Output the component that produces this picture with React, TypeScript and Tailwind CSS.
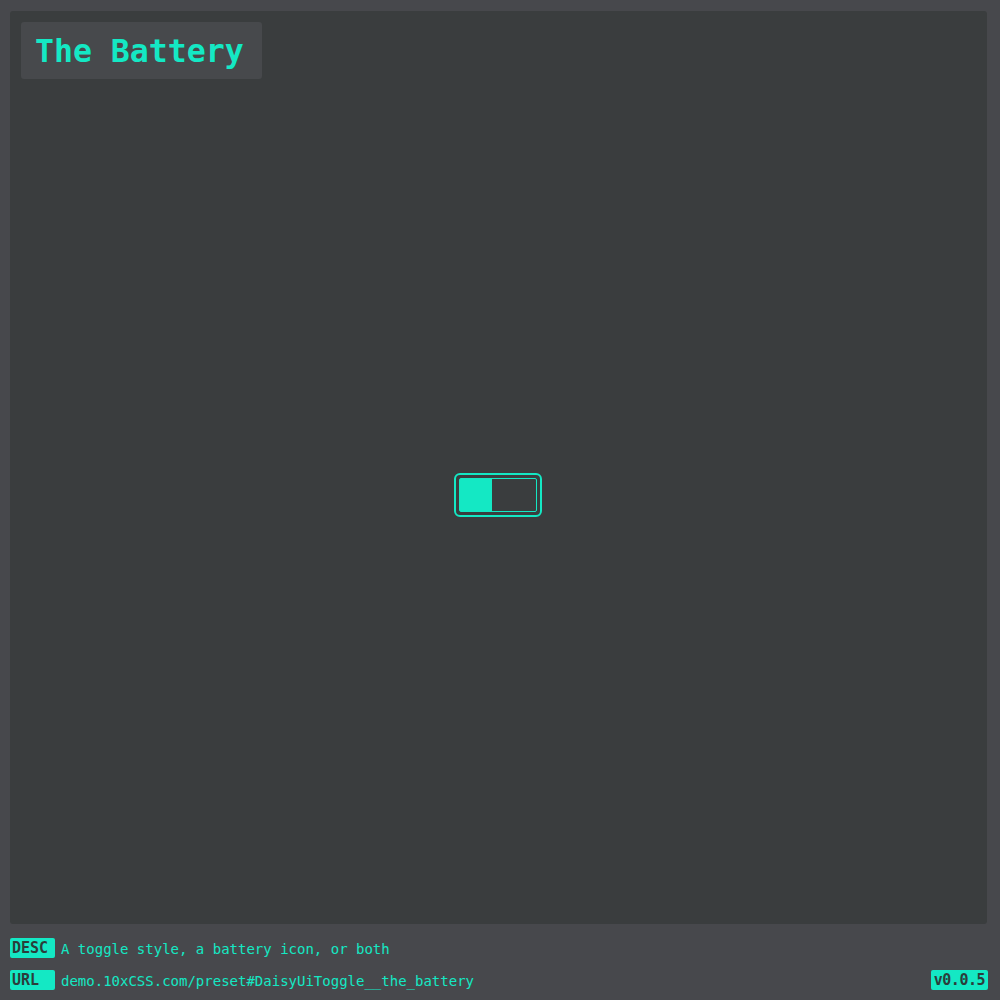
import React from 'react';

const mono = "font-['DejaVu_Sans_Mono','Liberation_Mono',monospace]";

const Battery: React.FC = () => (
  <div className="w-[88px] h-[44px] rounded-[6px] border-2 border-[#14e8c4] p-[3px]">
    <div className="w-full h-full border border-[#14e8c4] rounded-[2px] flex">
      <div className="w-[32px] h-full bg-[#14e8c4]" />
    </div>
  </div>
);

const App: React.FC = () => {
  return (
    <div className={`w-[1000px] h-[1000px] bg-[#47484c] flex flex-col ${mono}`}>
      <div className="mx-[10px] mt-[11px] w-[977px] h-[913px] bg-[#3a3d3e] rounded-[3px] p-[11px] flex flex-col">
        <div className="self-start bg-[#47494c] rounded-[3px] pl-[14px] pr-[18px] h-[57px] flex items-center">
          <h1 className="text-[31.5px] leading-none font-bold text-[#14e8c4] pt-[2px]">The Battery</h1>
        </div>
        <div className="flex-1 flex items-center justify-center pr-[2px] pb-[2px]">
          <Battery />
        </div>
      </div>
      <div className="px-[10px] mt-[14px] flex flex-col gap-[12px] text-[14px] text-[#14e8c4]">
        <div className="flex items-center gap-[6px] h-[20px]">
          <span className="w-[45px] h-[20px] bg-[#14e8c4] text-[#2b3d3b] font-bold text-[15px] leading-[21px] px-[2px] rounded-[2px]">DESC</span>
          <span className="pt-[3px]">A toggle style, a battery icon, or both</span>
        </div>
        <div className="flex items-center gap-[6px] h-[20px]">
          <span className="w-[45px] h-[20px] bg-[#14e8c4] text-[#2b3d3b] font-bold text-[15px] leading-[21px] px-[2px] rounded-[2px]">URL</span>
          <span className="pt-[3px]">demo.10xCSS.com/preset#DaisyUiToggle__the_battery</span>
          <span className="ml-auto mr-[2px] h-[20px] bg-[#14e8c4] text-[#2b3d3b] font-bold text-[15px] leading-[21px] px-[3px] rounded-[2px] tracking-[-0.5px]">v0.0.5</span>
        </div>
      </div>
    </div>
  );
};

export default App;
